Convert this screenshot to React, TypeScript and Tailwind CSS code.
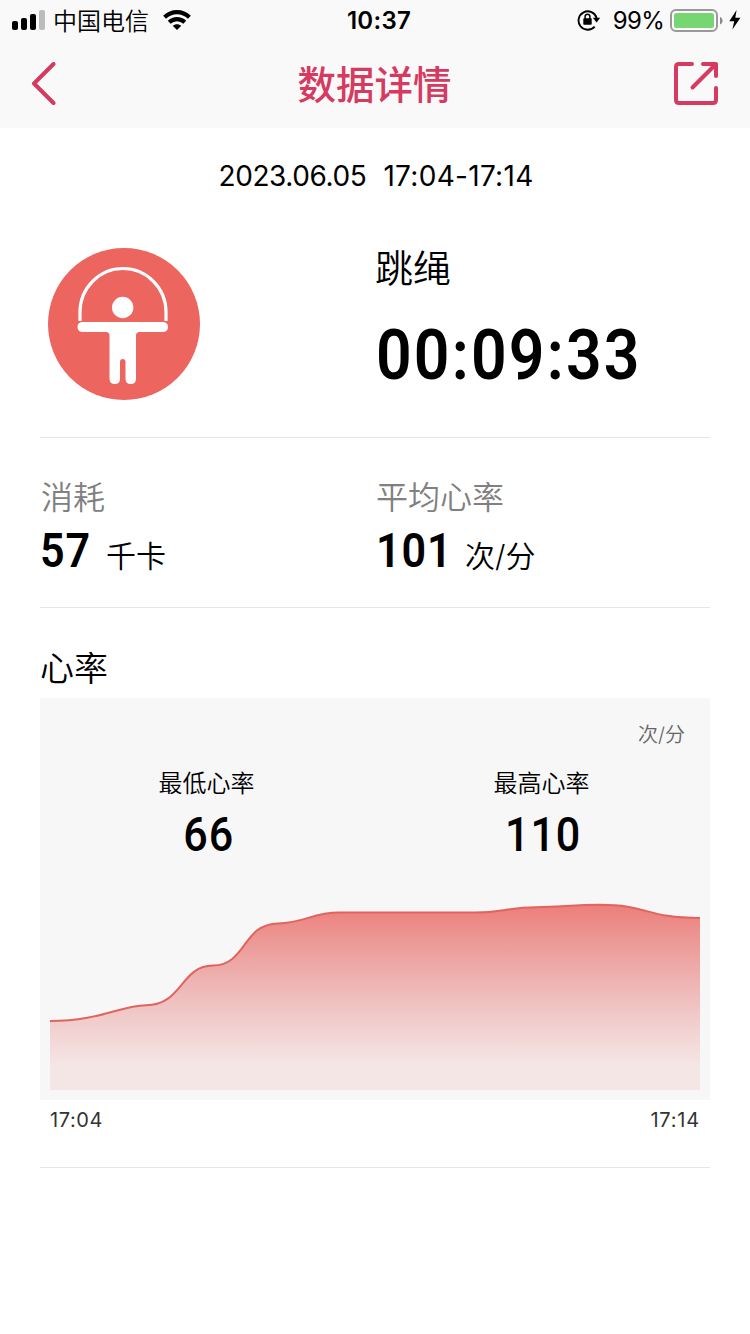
import { ReactNode } from "react";

const SignalIcon = () => (
  <svg width="34" height="22" viewBox="0 0 34 22">
    <rect x="0" y="12" width="6" height="9" rx="2" fill="#000" />
    <rect x="9" y="9" width="6" height="12" rx="2" fill="#000" />
    <rect x="18" y="5" width="6" height="16" rx="2" fill="#000" />
    <rect x="27" y="1" width="6" height="20" rx="2" fill="#bcbcbc" />
  </svg>
)

const WifiIcon = () => (
  <svg width="28" height="20" viewBox="0 0 28 20" fill="none" stroke="#000" strokeWidth="4.2">
    <path d="M1.6 7.2 C8.6 0.4 19.4 0.4 26.4 7.2" />
    <path d="M6.2 12.2 C10.8 8 17.2 8 21.8 12.2" />
    <path d="M14 20 L9.7 15.8 C12.2 13.6 15.8 13.6 18.3 15.8 Z" fill="#000" stroke="none" />
  </svg>
)

const LockIcon = () => (
  <svg width="24" height="22" viewBox="0 0 24 22" fill="none" stroke="#000">
    <path d="M17.7 17.6 A9.2 9.2 0 1 1 19.6 9" strokeWidth="1.9" />
    <path d="M15.8 8.7 H23.2 L19.6 13.4 Z" fill="#000" stroke="none" />
    <rect x="6.3" y="9.3" width="8.4" height="6.5" rx="0.8" fill="#000" stroke="none" />
    <path d="M8.1 10 V7.6 A2.4 2.4 0 0 1 12.9 7.6 V10" strokeWidth="1.5" />
  </svg>
)

const BatteryIcon = () => (
  <svg width="54" height="24" viewBox="0 0 54 24">
    <rect x="1" y="2" width="46" height="21" rx="5" fill="#fff" stroke="#999" strokeWidth="2" />
    <rect x="4" y="5" width="40" height="15" rx="2.5" fill="#76d672" />
    <path d="M50 9 C53.4 10 53.4 15.4 50 16.4 Z" fill="#8a8a8a" />
  </svg>
)

const BoltIcon = () => (
  <svg width="12" height="20" viewBox="0 0 12 20">
    <path d="M7.6 0 L0.3 11.2 H5.2 L3.4 19.6 L11.4 7.8 H6.3 Z" fill="#000" />
  </svg>
)

const BackIcon = () => (
  <svg width="26" height="44" viewBox="0 0 26 44" fill="none" stroke="#d53a60" strokeWidth="4" strokeLinecap="round" strokeLinejoin="round">
    <path d="M22.5 2 L3 21.5 L22.5 41" />
  </svg>
)

const ShareIcon = () => (
  <svg width="44" height="44" viewBox="0 0 44 44" fill="none" stroke="#d53a60" strokeWidth="4" strokeLinecap="round" strokeLinejoin="round">
    <path d="M18 2 H5 Q2 2 2 5 V38 Q2 41 5 41 H39 Q42 41 42 38 V26" />
    <path d="M29 2 H42 V14" />
    <path d="M41 3 L18.5 25.5" />
  </svg>
)

const RopeIcon = () => (
  <svg width="152" height="152" viewBox="0 0 152 152">
    <circle cx="76" cy="76" r="76" fill="#ec655f" />
    <path d="M32 73 V64 A43 43.5 0 0 1 118 64 V73" fill="none" stroke="#fff" strokeWidth="3.2" />
    <circle cx="74.7" cy="59.5" r="10.7" fill="#fff" />
    <path
      d="M35 74 H114.5 Q120 74 120 79 Q120 84 114.5 84 H91.5 Q88 84 88 87.5 V130.5 Q88 136 82.7 136 Q77.5 136 77.5 130.5 V114 Q77.5 111 74.7 111 Q72 111 72 114 V130.5 Q72 136 66.8 136 Q61.5 136 61.5 130.5 V87.5 Q61.5 84 58 84 H35 Q29.5 84 29.5 79 Q29.5 74 35 74 Z"
      fill="#fff" />
  </svg>
)

const HeartChart = () => {
  const curve = "M0 121 C50 121 70 105.5 96 105.2 C133 105 130 66 163 65.6 C197 65 192 24 228 23.4 C255 23 262 12.5 289 12.5 H425 C452 12.5 458 7.5 486 7.3 C510 7 525 4.8 550 4.8 C598 4.8 596 18 650 18"

  return (
    <svg width="650" height="190" viewBox="0 0 650 190" className="block">
      <defs>
        <linearGradient id="heart" x1="0" y1="0" x2="0" y2="1">
          <stop offset="0" stopColor="#ed7e7b" />
          <stop offset="0.25" stopColor="#eca09d" />
          <stop offset="0.6" stopColor="#f0cac9" />
          <stop offset="0.87" stopColor="#f5e6e6" />
          <stop offset="1" stopColor="#f5e6e6" />
        </linearGradient>
      </defs>
      <path d={`${ curve } V190 H0 Z`} fill="url(#heart)" />
      <path d={ curve } fill="none" stroke="#e0645f" strokeWidth="2" />
    </svg>
  )
}

type NumberProps = {
  children: ReactNode
  className?: string
}

const Digits = ({ children, className }: NumberProps) => (
  <span className={`block whitespace-nowrap font-[Roboto,sans-serif] ${ className ?? "" }`}>{ children }</span>
)

type MetricProps = {
  label: string
  value: string
  unit: string
  valueWidth: string
}

const Metric = ({ label, value, unit, valueWidth }: MetricProps) => (
  <div className="w-[335px]">
    <p className="h-12 pl-px text-[32px] font-[350] leading-[48px] text-[#808080]">{ label }</p>
    <div className="flex h-[58px] items-baseline">
      <div className={ valueWidth }>
        <Digits className="origin-left scale-x-[.88] text-[49px] font-semibold leading-[58px] tracking-[1px]">{ value }</Digits>
      </div>
      <span className="text-[30px] font-[350] leading-[58px]">{ unit }</span>
    </div>
  </div>
)

type ExtremeProps = {
  label: string
  value: string
}

const Extreme = ({ label, value }: ExtremeProps) => (
  <div className="flex w-[335px] flex-col items-center">
    <p className="pr-[2px] text-2xl font-[350] leading-9">{ label }</p>
    <Digits className="mt-[3px] scale-x-[.88] pl-[2px] text-[49px] font-medium leading-[60px] tracking-[1px]">{ value }</Digits>
  </div>
)

export default function App() {
  return (
    <div className="h-[1334px] w-[750px] overflow-hidden bg-white font-[Inter,'Noto_Sans_CJK_SC',sans-serif] text-black">
      <header className="h-32 bg-[#f9f9f9]">
        <div className="grid h-10 grid-cols-3 items-center pl-3 pr-[9px]">
          <div className="flex items-center">
            <SignalIcon />
            <span className="ml-[7px] mr-[14px] pt-[3px] text-2xl font-[350] leading-[37px]">中国电信</span>
            <WifiIcon />
          </div>
          <p className="pl-[5px] pt-[2px] text-center text-2xl font-semibold leading-[38px] tracking-[0.3px]">10:37</p>
          <div className="flex items-center justify-end">
            <LockIcon />
            <span className="ml-3 mr-[6px] pt-[2px] text-2xl leading-[38px] tracking-[-0.7px]">99%</span>
            <BatteryIcon />
            <span className="ml-[5px]"><BoltIcon /></span>
          </div>
        </div>
        <div className="flex h-[88px] items-center justify-between pl-[31px] pr-8">
          <div className="w-11"><BackIcon /></div>
          <h1 className="pt-[2px] text-[38.5px] font-medium leading-[54px] text-[#d53a60]">数据详情</h1>
          <ShareIcon />
        </div>
      </header>

      <main className="px-10">
        <p className="flex justify-center gap-[17px] pl-[2px] pt-7 text-[28px] leading-10">
          <span className="tracking-[-0.4px]">2023.06.05</span>
          <span className="tracking-[0.3px]">17:04-17:14</span>
        </p>

        <section className="mt-[42px] flex h-[200px] border-b border-[#e5e5e5] pt-[10px]">
          <div className="w-[335px] pl-2"><RopeIcon /></div>
          <div>
            <h2 className="pt-px text-[38px] font-[350] leading-[38px]">跳绳</h2>
            <Digits className="mt-[28px] origin-left scale-x-[.88] pl-px text-[71px] font-semibold leading-[80px] tracking-[2.5px]">00:09:33</Digits>
          </div>
        </section>

        <section className="flex h-[170px] border-b border-[#e5e5e5] pt-9">
          <Metric label="消耗" value="57" unit="千卡" valueWidth="w-[66px]" />
          <Metric label="平均心率" value="101" unit="次/分" valueWidth="w-[90px] pl-px" />
        </section>

        <section className="h-[560px] border-b border-[#e5e5e5]">
          <h2 className="h-[90px] pt-9 text-[34px] font-[350] leading-[50px]">心率</h2>
          <div className="h-[402px] bg-[#f7f7f7] px-[10px]">
            <p className="pr-[15px] pt-[22px] text-right text-xl font-[350] leading-[30px] text-[#666]">次/分</p>
            <div className="-mx-[10px] flex h-[150px] pt-4">
              <Extreme label="最低心率" value="66" />
              <Extreme label="最高心率" value="110" />
            </div>
            <HeartChart />
          </div>
          <div className="flex justify-between px-[10px] pt-[5px] text-xl leading-[30px] text-[#333]">
            <span className="tracking-[0.6px]">17:04</span>
            <span className="tracking-[0.8px]">17:14</span>
          </div>
        </section>
      </main>
    </div>
  )
}
